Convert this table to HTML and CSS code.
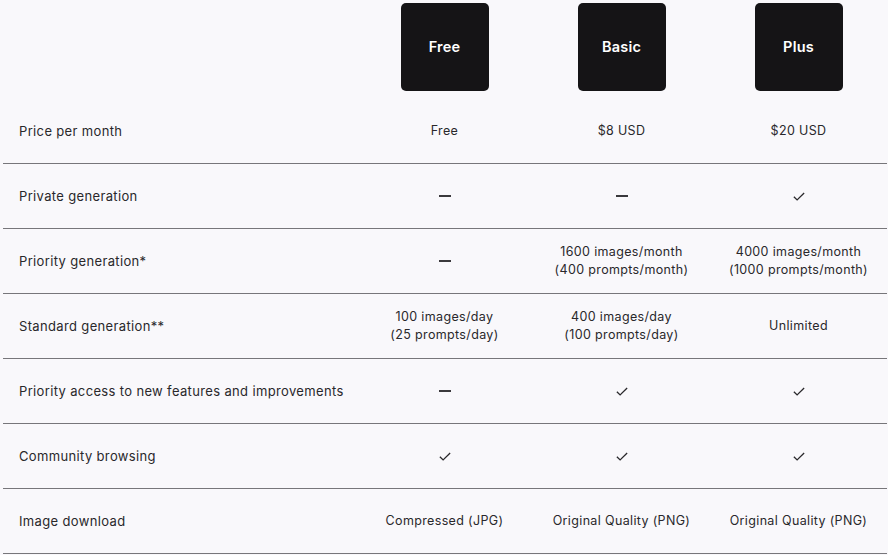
FILE: index.html
```html
<!DOCTYPE html>
<html>
<head>
<meta charset="utf-8">
<link rel="stylesheet" href="styles.css">
</head>
<body>
<div class="table">
  <div class="head">
    <div class="label"></div>
    <div class="plan"><div class="badge">Free</div></div>
    <div class="plan"><div class="badge">Basic</div></div>
    <div class="plan"><div class="badge">Plus</div></div>
  </div>

  <div class="row">
    <div class="label">Price per month</div>
    <div class="cell">Free</div>
    <div class="cell">$8 USD</div>
    <div class="cell">$20 USD</div>
  </div>

  <div class="row">
    <div class="label">Private generation</div>
    <div class="cell"><span class="dash"></span></div>
    <div class="cell"><span class="dash"></span></div>
    <div class="cell"><svg class="check" viewBox="0 0 14 10"><path d="M1 5.2 L4.8 9 L13 1" /></svg></div>
  </div>

  <div class="row">
    <div class="label">Priority generation*</div>
    <div class="cell"><span class="dash"></span></div>
    <div class="cell">1600 images/month<br>(400 prompts/month)</div>
    <div class="cell">4000 images/month<br>(1000 prompts/month)</div>
  </div>

  <div class="row">
    <div class="label">Standard generation**</div>
    <div class="cell">100 images/day<br>(25 prompts/day)</div>
    <div class="cell">400 images/day<br>(100 prompts/day)</div>
    <div class="cell">Unlimited</div>
  </div>

  <div class="row">
    <div class="label">Priority access to new features and improvements</div>
    <div class="cell"><span class="dash"></span></div>
    <div class="cell"><svg class="check" viewBox="0 0 14 10"><path d="M1 5.2 L4.8 9 L13 1" /></svg></div>
    <div class="cell"><svg class="check" viewBox="0 0 14 10"><path d="M1 5.2 L4.8 9 L13 1" /></svg></div>
  </div>

  <div class="row">
    <div class="label">Community browsing</div>
    <div class="cell"><svg class="check" viewBox="0 0 14 10"><path d="M1 5.2 L4.8 9 L13 1" /></svg></div>
    <div class="cell"><svg class="check" viewBox="0 0 14 10"><path d="M1 5.2 L4.8 9 L13 1" /></svg></div>
    <div class="cell"><svg class="check" viewBox="0 0 14 10"><path d="M1 5.2 L4.8 9 L13 1" /></svg></div>
  </div>

  <div class="row">
    <div class="label">Image download</div>
    <div class="cell">Compressed (JPG)</div>
    <div class="cell">Original Quality (PNG)</div>
    <div class="cell">Original Quality (PNG)</div>
  </div>
</div>
</body>
</html>
```

FILE: styles.css
```css
html, body {
  margin: 0;
  padding: 0;
  background: #f9f8fb;
}

body {
  font-family: "Inter", "Open Sans", sans-serif;
  color: #29282b;
  font-size: 13px;
  letter-spacing: 0.35px;
}

.table {
  margin-left: 3px;
  width: 884px;
}

.head,
.row {
  display: grid;
  grid-template-columns: 353px 177px 177px 177px;
}

.head {
  padding-top: 3px;
  height: 99px;
  box-sizing: border-box;
}

.plan {
  display: flex;
  justify-content: center;
}

.badge {
  width: 88px;
  height: 88px;
  background: #151416;
  border-radius: 5px;
  color: #ffffff;
  font-weight: 600;
  font-size: 14.5px;
  letter-spacing: 0.2px;
  display: flex;
  align-items: center;
  justify-content: center;
  padding-bottom: 2px;
  box-sizing: border-box;
}

.row {
  height: 65px;
  border-bottom: 1px solid #77767a;
  box-sizing: border-box;
  align-items: center;
}

.row .label {
  padding-left: 16px;
  font-size: 13px;
}

.cell {
  text-align: center;
  font-size: 12.5px;
  line-height: 18px;
  display: flex;
  justify-content: center;
  align-items: center;
}

.dash {
  display: block;
  width: 12px;
  height: 2px;
  background: #3a393c;
}

.check {
  width: 12px;
  height: 9px;
  fill: none;
  stroke: #29282b;
  stroke-width: 1.5;
}
```
